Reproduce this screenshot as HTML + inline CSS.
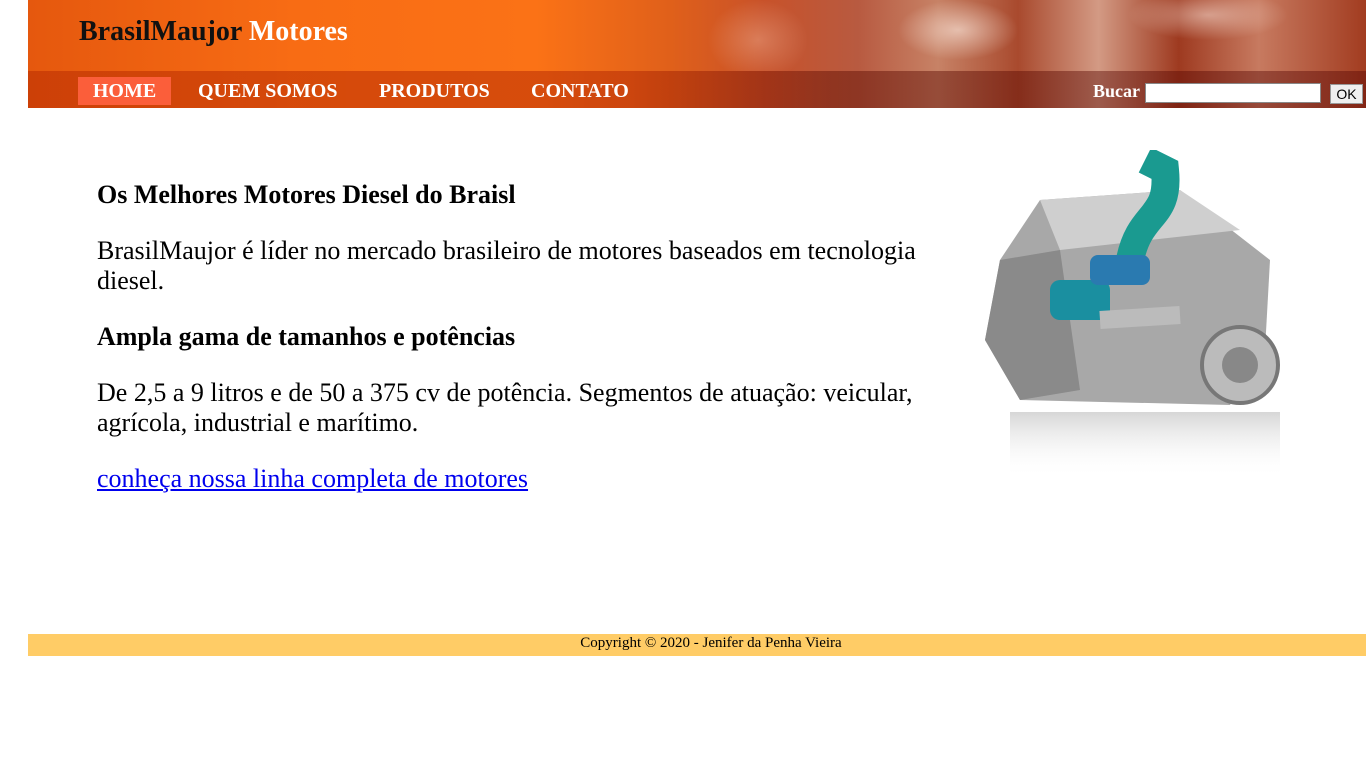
<!DOCTYPE html>
<html><head><meta charset="utf-8"><style>
body{margin:0;background:#fff;font-family:"Liberation Serif",serif;}
#hdr{position:absolute;left:28px;top:0;width:1338px;height:108px;overflow:hidden;
background:linear-gradient(90deg,#e5580e 0%,#f86c14 20%,#fb7216 38%,#e0601a 48%,#c8522a 55%,#b85a40 62%,#c78266 68%,#a94a2e 74%,#d39a84 80%,#9e3a20 86%,#c77a60 92%,#a23c20 100%);}
#hdr .hl{position:absolute;left:620px;top:0;width:720px;height:71px;background:
radial-gradient(ellipse 60px 30px at 310px 30px,rgba(255,240,230,.6),transparent),
radial-gradient(ellipse 80px 25px at 560px 15px,rgba(255,235,225,.5),transparent),
radial-gradient(ellipse 50px 40px at 110px 40px,rgba(255,220,200,.3),transparent);}
#nav{position:absolute;left:0;top:71px;width:100%;height:37px;background:linear-gradient(90deg,rgba(180,40,0,.5),rgba(170,30,0,.45) 45%,rgba(90,10,0,.45) 60%,rgba(80,0,0,.4));}
h1{position:absolute;left:51px;top:16px;margin:0;font-size:28px;font-weight:bold;color:#111;}
h1 span{color:#fff}
.m{position:absolute;top:77px;height:28px;line-height:29px;color:#fff;font-weight:bold;font-size:20px;}
.inp{position:absolute;left:1145px;top:83px;width:176px;height:20px;background:#fff;border:1px solid #888;box-sizing:border-box;}
.ok{position:absolute;left:1330px;top:84px;width:33px;height:20px;background:#efefef;border:1px solid #999;box-sizing:border-box;font:14px "Liberation Sans",sans-serif;text-align:center;line-height:18px;color:#000}
#c{position:absolute;left:97px;top:1px;width:825px;font-size:26px;color:#000;}
#c h3{position:absolute;margin:0;font-size:26px;font-weight:bold}
#c p{position:absolute;margin:0;line-height:30px;width:825px}
a{color:#00e}
#f{position:absolute;left:28px;top:634px;width:1338px;height:22px;background:#ffcc66;text-align:center;font-size:15px;line-height:18px;box-sizing:border-box;padding-left:28px}
</style></head><body>
<div id="hdr"><div class="hl"></div><div id="nav"></div>
<h1>BrasilMaujor <span>Motores</span></h1></div>
<div class="m" style="left:78px;width:93px;background:#fb5e3a;text-align:center">HOME</div>
<div class="m" style="left:198px">QUEM SOMOS</div>
<div class="m" style="left:379px">PRODUTOS</div>
<div class="m" style="left:531px">CONTATO</div>
<div style="position:absolute;left:1093px;top:81px;color:#fff;font-size:18px;font-weight:bold">Bucar</div>
<div class="inp"></div><div class="ok">OK</div>
<div id="c">
<h3 style="top:179px">Os Melhores Motores Diesel do Braisl</h3>
<p style="top:235px">BrasilMaujor é líder no mercado brasileiro de motores baseados em tecnologia diesel.</p>
<h3 style="top:321px">Ampla gama de tamanhos e potências</h3>
<p style="top:377px">De 2,5 a 9 litros e de 50 a 375 cv de potência. Segmentos de atuação: veicular, agrícola, industrial e marítimo.</p>
<p style="top:463px"><a href="#">conheça nossa linha completa de motores</a></p>
</div>
<svg style="position:absolute;left:980px;top:150px" width="305" height="330">
<defs><linearGradient id="r" x1="0" y1="0" x2="0" y2="1"><stop offset="0" stop-color="#bbb" stop-opacity=".6"/><stop offset="1" stop-color="#fff" stop-opacity="0"/></linearGradient></defs>
<polygon points="60,50 200,40 290,110 285,200 250,255 40,250 5,190 20,110" fill="#a8a8a8"/>
<polygon points="60,50 200,40 260,80 80,100" fill="#cfcfcf"/>
<polygon points="20,110 80,100 100,240 40,250 5,190" fill="#8a8a8a"/>
<circle cx="260" cy="215" r="38" fill="#bbb" stroke="#777" stroke-width="4"/><circle cx="260" cy="215" r="18" fill="#888"/>
<path d="M150 110 C160 60 190 70 185 20 L165 10" stroke="#1a9a90" stroke-width="28" fill="none"/>
<rect x="70" y="130" width="60" height="40" rx="10" fill="#1a8fa0"/>
<rect x="110" y="105" width="60" height="30" rx="8" fill="#2a7ab0"/>
<path d="M120 170 L200 165" stroke="#bbb" stroke-width="18"/>
<rect x="30" y="262" width="270" height="66" fill="url(#r)"/>
</svg>
<div id="f">Copyright © 2020 - Jenifer da Penha Vieira</div>
</body></html>
